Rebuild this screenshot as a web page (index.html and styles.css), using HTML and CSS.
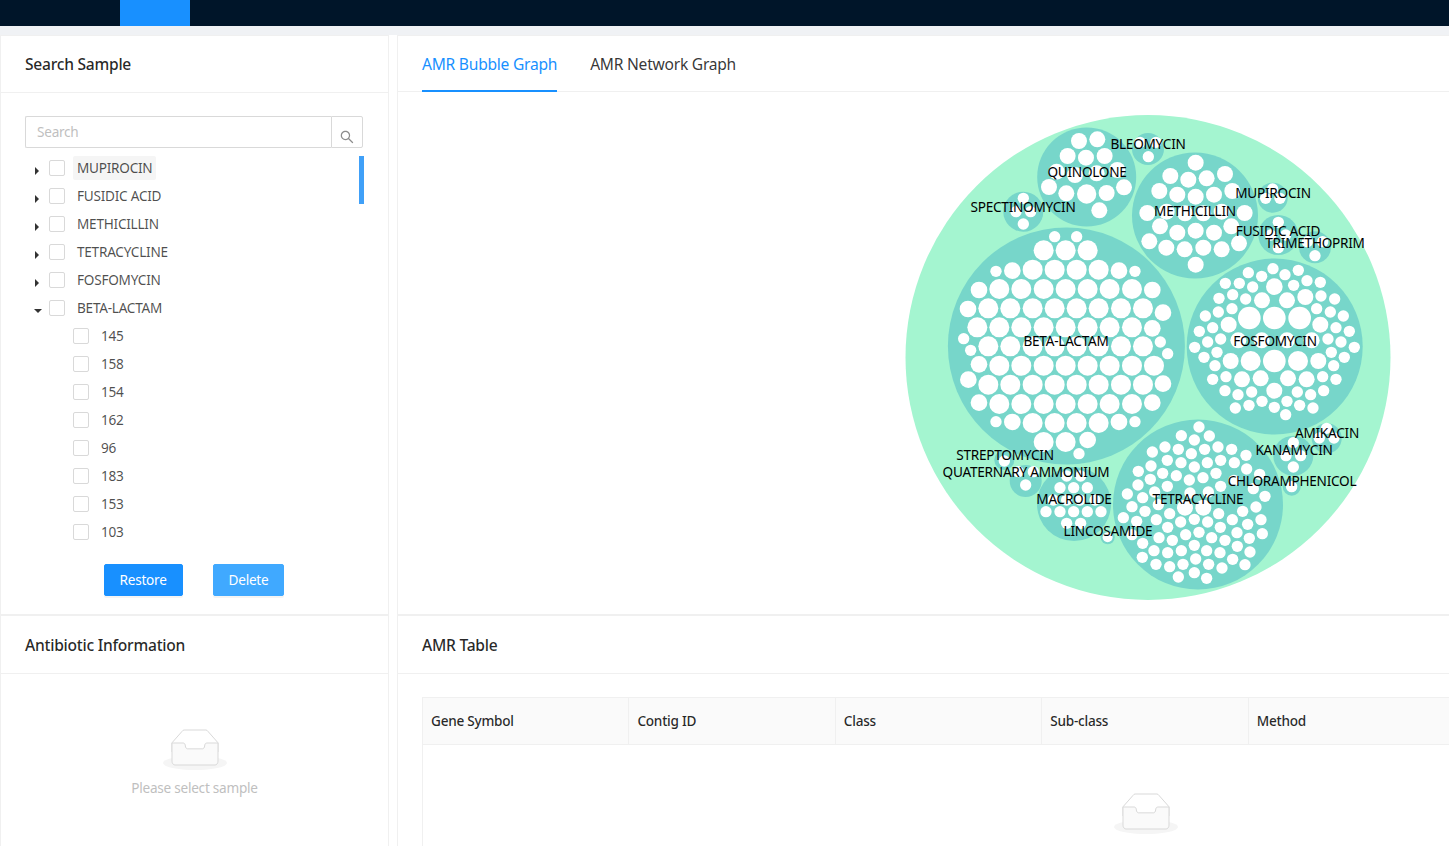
FILE: index.html
```html
<!DOCTYPE html>
<html lang="en">
<head>
    <meta charset="UTF-8">
    <meta name="viewport" content="width=device-width, initial-scale=1.0">
    <title>AMR Graph</title>
    <link rel="stylesheet" href="styles.css">
</head>
<body>
    <div class="topbar">
        <div class="topbar-item"></div>
    </div>
    <div class="page">
        <div class="col-left">
            <div class="card card-search">
                <div class="card-head">Search Sample</div>
                <div class="search-body">
                    <div class="search-box">
                        <input class="search-input" type="text" placeholder="Search">
                        <button class="search-btn" type="button">
                            <svg class="search-icon" viewBox="64 64 896 896"><path d="M909.6 854.5L649.9 594.8C690.2 542.7 712 479 712 412c0-80.2-31.3-155.4-87.9-212.1-56.6-56.7-132-87.9-212.1-87.9s-155.5 31.3-212.1 87.9C143.2 256.5 112 331.8 112 412c0 80.1 31.3 155.5 87.9 212.1C256.5 680.8 331.8 712 412 712c67 0 130.6-21.8 182.7-62l259.7 259.6a8.2 8.2 0 0 0 11.6 0l43.6-43.5a8.2 8.2 0 0 0 0-11.6zM570.4 570.4C528 612.7 471.8 636 412 636s-116-23.3-158.4-65.6C211.3 528 188 471.8 188 412s23.3-116 65.6-158.4C296 211.3 352.2 188 412 188s116 23.3 158.4 65.6S636 352.2 636 412s-23.3 116-65.6 158.4z"/></svg>
                        </button>
                    </div>
                    <div class="tree">
                        <div class="tree-thumb"></div>
                        <div class="tree-row"><span class="caret"></span><span class="check"></span><span class="tree-label selected">MUPIROCIN</span></div>
                        <div class="tree-row"><span class="caret"></span><span class="check"></span><span class="tree-label">FUSIDIC ACID</span></div>
                        <div class="tree-row"><span class="caret"></span><span class="check"></span><span class="tree-label">METHICILLIN</span></div>
                        <div class="tree-row"><span class="caret"></span><span class="check"></span><span class="tree-label">TETRACYCLINE</span></div>
                        <div class="tree-row"><span class="caret"></span><span class="check"></span><span class="tree-label">FOSFOMYCIN</span></div>
                        <div class="tree-row"><span class="caret open"></span><span class="check"></span><span class="tree-label">BETA-LACTAM</span></div>
                        <div class="tree-row child"><span class="check"></span><span class="tree-label">145</span></div>
                        <div class="tree-row child"><span class="check"></span><span class="tree-label">158</span></div>
                        <div class="tree-row child"><span class="check"></span><span class="tree-label">154</span></div>
                        <div class="tree-row child"><span class="check"></span><span class="tree-label">162</span></div>
                        <div class="tree-row child"><span class="check"></span><span class="tree-label">96</span></div>
                        <div class="tree-row child"><span class="check"></span><span class="tree-label">183</span></div>
                        <div class="tree-row child"><span class="check"></span><span class="tree-label">153</span></div>
                        <div class="tree-row child"><span class="check"></span><span class="tree-label">103</span></div>
                    </div>
                    <div class="actions">
                        <button class="btn" type="button">Restore</button>
                        <button class="btn btn-light" type="button">Delete</button>
                    </div>
                </div>
            </div>
            <div class="card card-info">
                <div class="card-head">Antibiotic Information</div>
                <div class="empty empty-info">
                    <svg class="empty-icon" viewBox="0 0 64 41"><g transform="translate(0 1)" fill="none" fill-rule="evenodd"><ellipse fill="#f5f5f5" cx="32" cy="33" rx="32" ry="7"/><g fill-rule="nonzero" stroke="#d9d9d9"><path d="M55 12.76L44.854 1.258C44.367.474 43.656 0 42.907 0H21.093c-.749 0-1.46.474-1.947 1.257L9 12.761V22h46v-9.24z"/><path d="M41.613 15.931c0-1.605.994-2.93 2.227-2.931H55v18.137C55 33.26 53.68 35 52.05 35h-40.1C10.32 35 9 33.259 9 31.137V13h11.16c1.233 0 2.227 1.323 2.227 2.928v.022c0 1.605 1.005 2.901 2.237 2.901h14.752c1.232 0 2.237-1.308 2.237-2.913v-.007z" fill="#fafafa"/></g></g></svg>
                    <div class="empty-text">Please select sample</div>
                </div>
            </div>
        </div>
        <div class="col-right">
            <div class="card card-graph">
                <div class="tabs">
                    <div class="tab active">AMR Bubble Graph</div>
                    <div class="tab">AMR Network Graph</div>
                </div>
                <svg class="bubble" viewBox="898 107 500 500">
                    <circle class="root" cx="1148" cy="357.5" r="242.5"/>
                    <g class="group">
                        <circle cx="1066.4" cy="346" r="118.5"/>
                        <circle cx="1274.7" cy="346.5" r="88"/>
                        <circle cx="1198" cy="504.5" r="85"/>
                        <circle cx="1195" cy="215.5" r="63"/>
                        <circle cx="1086.7" cy="177" r="49.5"/>
                        <circle cx="1023.3" cy="211.7" r="20"/>
                        <circle cx="1148" cy="149" r="16"/>
                        <circle cx="1272.7" cy="197.7" r="15"/>
                        <circle cx="1278.3" cy="235" r="20"/>
                        <circle cx="1315" cy="247.3" r="16"/>
                        <circle cx="1326.7" cy="438.3" r="15"/>
                        <circle cx="1293.3" cy="455.7" r="20"/>
                        <circle cx="1291.7" cy="486.7" r="9"/>
                        <circle cx="1004.3" cy="460" r="10"/>
                        <circle cx="1025.7" cy="481" r="16"/>
                        <circle cx="1074" cy="504" r="37"/>
                        <circle cx="1107.7" cy="537.3" r="7"/>
                    </g>

                    <!-- BETA-LACTAM -->
                    <g class="leaf" transform="translate(945 225) scale(.3333)">
                        <circle cx="329" cy="35" r="17"/><circle cx="395" cy="35" r="17"/>
                        <circle cx="296" cy="76" r="30"/><circle cx="362" cy="76" r="30"/><circle cx="428" cy="76" r="30"/>
                        <circle cx="153" cy="139" r="17"/><circle cx="202" cy="137" r="25"/><circle cx="263" cy="134" r="30"/><circle cx="329" cy="134" r="30"/><circle cx="395" cy="134" r="30"/><circle cx="461" cy="134" r="30"/><circle cx="522" cy="137" r="25"/><circle cx="570" cy="139" r="17"/>
                        <circle cx="102" cy="195" r="25"/><circle cx="163" cy="192" r="30"/><circle cx="229" cy="192" r="30"/><circle cx="296" cy="192" r="30"/><circle cx="362" cy="192" r="30"/><circle cx="428" cy="192" r="30"/><circle cx="494" cy="192" r="30"/><circle cx="561" cy="192" r="30"/><circle cx="622" cy="195" r="25"/>
                        <circle cx="69" cy="252" r="25"/><circle cx="130" cy="250" r="30"/><circle cx="196" cy="250" r="30"/><circle cx="263" cy="250" r="30"/><circle cx="329" cy="250" r="30"/><circle cx="395" cy="250" r="30"/><circle cx="461" cy="250" r="30"/><circle cx="528" cy="250" r="30"/><circle cx="594" cy="250" r="30"/><circle cx="654" cy="263" r="25"/>
                        <circle cx="97" cy="307" r="30"/><circle cx="163" cy="307" r="30"/><circle cx="229" cy="307" r="30"/><circle cx="296" cy="307" r="30"/><circle cx="362" cy="307" r="30"/><circle cx="428" cy="307" r="30"/><circle cx="494" cy="307" r="30"/><circle cx="561" cy="307" r="30"/><circle cx="622" cy="310" r="25"/>
                        <circle cx="56" cy="341" r="17"/><circle cx="77" cy="376" r="17"/><circle cx="130" cy="364" r="30"/><circle cx="196" cy="364" r="30"/><circle cx="263" cy="364" r="30"/><circle cx="329" cy="364" r="30"/><circle cx="395" cy="364" r="30"/><circle cx="461" cy="364" r="30"/><circle cx="528" cy="364" r="30"/><circle cx="594" cy="364" r="30"/><circle cx="646" cy="351" r="17"/><circle cx="668" cy="386" r="17"/>
                        <circle cx="102" cy="418" r="25"/><circle cx="163" cy="422" r="30"/><circle cx="229" cy="422" r="30"/><circle cx="296" cy="422" r="30"/><circle cx="362" cy="422" r="30"/><circle cx="428" cy="422" r="30"/><circle cx="494" cy="422" r="30"/><circle cx="561" cy="422" r="30"/><circle cx="627" cy="422" r="30"/>
                        <circle cx="70" cy="464" r="25"/><circle cx="130" cy="479" r="30"/><circle cx="196" cy="479" r="30"/><circle cx="263" cy="479" r="30"/><circle cx="329" cy="479" r="30"/><circle cx="395" cy="479" r="30"/><circle cx="461" cy="479" r="30"/><circle cx="528" cy="479" r="30"/><circle cx="594" cy="479" r="30"/><circle cx="654" cy="476" r="25"/>
                        <circle cx="102" cy="533" r="25"/><circle cx="163" cy="537" r="30"/><circle cx="229" cy="537" r="30"/><circle cx="296" cy="537" r="30"/><circle cx="362" cy="537" r="30"/><circle cx="428" cy="537" r="30"/><circle cx="494" cy="537" r="30"/><circle cx="561" cy="537" r="30"/><circle cx="622" cy="533" r="25"/>
                        <circle cx="153" cy="590" r="17"/><circle cx="202" cy="591" r="25"/><circle cx="263" cy="594" r="30"/><circle cx="329" cy="594" r="30"/><circle cx="395" cy="594" r="30"/><circle cx="461" cy="594" r="30"/><circle cx="522" cy="591" r="25"/><circle cx="570" cy="590" r="17"/>
                        <circle cx="296" cy="651" r="30"/><circle cx="362" cy="651" r="30"/><circle cx="428" cy="645" r="25"/><circle cx="402" cy="686" r="17"/>
                    </g>

                    <!-- FOSFOMYCIN -->
                    <g class="leaf" transform="translate(1185 257) scale(.3333)">
                        <circle cx="264" cy="35" r="17"/><circle cx="190" cy="47" r="17"/><circle cx="300" cy="53" r="17"/><circle cx="340" cy="40" r="17"/><circle cx="230" cy="58" r="17"/>
                        <circle cx="121" cy="79" r="17"/><circle cx="163" cy="79" r="17"/><circle cx="203" cy="90" r="17"/><circle cx="268" cy="89" r="25"/><circle cx="326" cy="85" r="17"/><circle cx="366" cy="71" r="17"/><circle cx="406" cy="76" r="17"/>
                        <circle cx="102" cy="124" r="17"/><circle cx="143" cy="113" r="17"/><circle cx="182" cy="126" r="17"/><circle cx="231" cy="130" r="24"/><circle cx="306" cy="130" r="24"/><circle cx="361" cy="120" r="24"/><circle cx="408" cy="117" r="17"/><circle cx="449" cy="126" r="17"/>
                        <circle cx="100" cy="165" r="17"/><circle cx="141" cy="155" r="17"/><circle cx="61" cy="177" r="17"/><circle cx="193" cy="183" r="34"/><circle cx="268" cy="183" r="34"/><circle cx="344" cy="183" r="34"/><circle cx="395" cy="155" r="17"/><circle cx="436" cy="165" r="17"/><circle cx="475" cy="177" r="17"/>
                        <circle cx="83" cy="212" r="17"/><circle cx="43" cy="223" r="17"/><circle cx="131" cy="203" r="24"/><circle cx="406" cy="203" r="24"/><circle cx="453" cy="212" r="17"/><circle cx="493" cy="223" r="17"/>
                        <circle cx="107" cy="246" r="17"/><circle cx="68" cy="255" r="17"/><circle cx="29" cy="271" r="17"/><circle cx="429" cy="246" r="17"/><circle cx="468" cy="255" r="17"/><circle cx="508" cy="271" r="17"/>
                        <circle cx="160" cy="250" r="24"/><circle cx="230" cy="250" r="24"/><circle cx="306" cy="250" r="24"/><circle cx="380" cy="250" r="24"/>
                        <circle cx="96" cy="286" r="17"/><circle cx="57" cy="301" r="17"/><circle cx="439" cy="286" r="17"/><circle cx="478" cy="301" r="17"/>
                        <circle cx="137" cy="312" r="24"/><circle cx="197" cy="312" r="30"/><circle cx="268" cy="312" r="34"/><circle cx="339" cy="312" r="30"/><circle cx="400" cy="312" r="24"/>
                        <circle cx="90" cy="326" r="17"/><circle cx="446" cy="326" r="17"/>
                        <circle cx="83" cy="367" r="17"/><circle cx="123" cy="359" r="17"/><circle cx="171" cy="367" r="24"/><circle cx="227" cy="364" r="24"/><circle cx="309" cy="364" r="24"/><circle cx="365" cy="367" r="24"/><circle cx="413" cy="359" r="17"/><circle cx="453" cy="367" r="17"/>
                        <circle cx="120" cy="401" r="17"/><circle cx="159" cy="413" r="17"/><circle cx="200" cy="405" r="17"/><circle cx="268" cy="401" r="24"/><circle cx="337" cy="405" r="17"/><circle cx="377" cy="413" r="17"/><circle cx="416" cy="401" r="17"/>
                        <circle cx="151" cy="453" r="17"/><circle cx="192" cy="445" r="17"/><circle cx="231" cy="433" r="17"/><circle cx="268" cy="451" r="17"/><circle cx="306" cy="433" r="17"/><circle cx="344" cy="445" r="17"/><circle cx="384" cy="453" r="17"/><circle cx="302" cy="473" r="17"/>
                    </g>

                    <!-- TETRACYCLINE -->
                    <g class="leaf" transform="translate(1110 417) scale(.3333)">
                        <circle cx="267" cy="30" r="17"/><circle cx="214" cy="56" r="17"/><circle cx="298" cy="57" r="17"/><circle cx="253" cy="69" r="17"/>
                        <circle cx="127" cy="105" r="17"/><circle cx="165" cy="90" r="17"/><circle cx="205" cy="97" r="17"/><circle cx="244" cy="110" r="17"/><circle cx="284" cy="97" r="17"/><circle cx="324" cy="90" r="17"/><circle cx="365" cy="97" r="17"/><circle cx="408" cy="115" r="17"/>
                        <circle cx="85" cy="163" r="17"/><circle cx="123" cy="147" r="17"/><circle cx="172" cy="130" r="17"/><circle cx="213" cy="137" r="17"/><circle cx="253" cy="150" r="17"/><circle cx="292" cy="137" r="17"/><circle cx="332" cy="130" r="17"/><circle cx="373" cy="137" r="17"/><circle cx="410" cy="156" r="17"/>
                        <circle cx="158" cy="169" r="17"/><circle cx="199" cy="176" r="17"/><circle cx="238" cy="189" r="17"/><circle cx="279" cy="182" r="17"/><circle cx="318" cy="169" r="17"/><circle cx="449" cy="172" r="17"/>
                        <circle cx="84" cy="204" r="17"/><circle cx="121" cy="187" r="17"/><circle cx="172" cy="208" r="17"/><circle cx="332" cy="208" r="17"/><circle cx="372" cy="190" r="17"/><circle cx="430" cy="215" r="17"/><circle cx="240" cy="228" r="17"/><circle cx="295" cy="225" r="17"/>
                        <circle cx="52" cy="231" r="17"/><circle cx="98" cy="242" r="17"/><circle cx="134" cy="225" r="17"/><circle cx="465" cy="238" r="17"/>
                        <circle cx="66" cy="269" r="17"/><circle cx="105" cy="283" r="17"/><circle cx="145" cy="263" r="17"/><circle cx="40" cy="302" r="17"/><circle cx="80" cy="313" r="17"/><circle cx="438" cy="270" r="17"/><circle cx="398" cy="283" r="17"/>
                        <circle cx="179" cy="290" r="17"/><circle cx="225" cy="272" r="24"/><circle cx="280" cy="272" r="24"/><circle cx="326" cy="290" r="17"/><circle cx="367" cy="308" r="17"/><circle cx="453" cy="308" r="17"/>
                        <circle cx="139" cy="308" r="17"/><circle cx="212" cy="315" r="17"/><circle cx="253" cy="307" r="17"/><circle cx="293" cy="315" r="17"/><circle cx="413" cy="322" r="17"/>
                        <circle cx="173" cy="331" r="17"/><circle cx="331" cy="331" r="17"/><circle cx="66" cy="353" r="17"/><circle cx="147" cy="362" r="17"/><circle cx="227" cy="353" r="17"/><circle cx="267" cy="346" r="17"/><circle cx="381" cy="347" r="17"/><circle cx="457" cy="350" r="17"/>
                        <circle cx="98" cy="379" r="17"/><circle cx="187" cy="370" r="17"/><circle cx="305" cy="362" r="17"/><circle cx="345" cy="370" r="17"/><circle cx="418" cy="364" r="17"/>
                        <circle cx="132" cy="401" r="17"/><circle cx="253" cy="385" r="17"/><circle cx="382" cy="388" r="17"/>
                        <circle cx="97" cy="421" r="17"/><circle cx="173" cy="407" r="17"/><circle cx="214" cy="401" r="17"/><circle cx="290" cy="401" r="17"/><circle cx="330" cy="407" r="17"/><circle cx="420" cy="405" r="17"/>
                        <circle cx="138" cy="442" r="17"/><circle cx="179" cy="449" r="17"/><circle cx="219" cy="442" r="17"/><circle cx="257" cy="426" r="17"/><circle cx="296" cy="442" r="17"/><circle cx="336" cy="453" r="17"/><circle cx="368" cy="427" r="17"/><circle cx="405" cy="443" r="17"/>
                        <circle cx="205" cy="480" r="17"/><circle cx="253" cy="467" r="17"/><circle cx="290" cy="484" r="17"/>
                    </g>

                    <!-- METHICILLIN, MUPIROCIN, FUSIDIC ACID, TRIMETHOPRIM, BLEOMYCIN -->
                    <g class="leaf" transform="translate(1120 110) scale(.3333)">
                        <circle cx="227" cy="158" r="24"/><circle cx="151" cy="198" r="24"/><circle cx="205" cy="209" r="24"/><circle cx="260" cy="205" r="24"/><circle cx="315" cy="192" r="24"/>
                        <circle cx="118" cy="243" r="24"/><circle cx="172" cy="254" r="24"/><circle cx="227" cy="260" r="24"/><circle cx="282" cy="254" r="24"/><circle cx="337" cy="243" r="24"/>
                        <circle cx="82" cy="309" r="24"/><circle cx="140" cy="305" r="24"/><circle cx="195" cy="310" r="24"/><circle cx="250" cy="310" r="24"/><circle cx="305" cy="305" r="24"/><circle cx="374" cy="309" r="24"/>
                        <circle cx="120" cy="349" r="24"/><circle cx="172" cy="368" r="24"/><circle cx="227" cy="362" r="24"/><circle cx="282" cy="368" r="24"/><circle cx="334" cy="349" r="24"/>
                        <circle cx="88" cy="394" r="24"/><circle cx="139" cy="413" r="24"/><circle cx="194" cy="418" r="24"/><circle cx="250" cy="413" r="24"/><circle cx="305" cy="418" r="24"/><circle cx="357" cy="400" r="24"/><circle cx="227" cy="464" r="24"/>
                        <circle cx="437" cy="265" r="17"/><circle cx="480" cy="265" r="17"/><circle cx="458" cy="237" r="17"/>
                        <circle cx="475" cy="337" r="17"/><circle cx="452" cy="375" r="17"/><circle cx="497" cy="375" r="17"/><circle cx="475" cy="413" r="17"/>
                        <circle cx="585" cy="437" r="17"/><circle cx="562" cy="395" r="17"/><circle cx="608" cy="395" r="17"/>
                        <circle cx="85" cy="140" r="17"/><circle cx="60" cy="97" r="17"/><circle cx="108" cy="97" r="17"/>
                    </g>

                    <!-- QUINOLONE, SPECTINOMYCIN -->
                    <g class="leaf" transform="translate(900 110) scale(.3333)">
                        <circle cx="537" cy="93" r="24"/><circle cx="592" cy="88" r="24"/><circle cx="503" cy="138" r="24"/><circle cx="558" cy="143" r="24"/><circle cx="614" cy="138" r="24"/>
                        <circle cx="470" cy="185" r="24"/><circle cx="525" cy="195" r="24"/><circle cx="590" cy="190" r="24"/><circle cx="652" cy="180" r="24"/>
                        <circle cx="447" cy="231" r="24"/><circle cx="499" cy="250" r="24"/><circle cx="560" cy="252" r="29"/><circle cx="620" cy="249" r="24"/><circle cx="672" cy="232" r="24"/><circle cx="598" cy="301" r="24"/>
                        <circle cx="370" cy="265" r="17"/><circle cx="348" cy="305" r="17"/><circle cx="392" cy="305" r="17"/><circle cx="370" cy="342" r="17"/>
                    </g>

                    <!-- AMIKACIN, KANAMYCIN, CHLORAMPHENICOL -->
                    <g class="leaf" transform="translate(1120 350) scale(.3333)">
                        <circle cx="598" cy="264" r="17"/><circle cx="642" cy="264" r="17"/><circle cx="620" cy="235" r="17"/>
                        <circle cx="520" cy="278" r="17"/><circle cx="498" cy="317" r="17"/><circle cx="542" cy="317" r="17"/><circle cx="520" cy="351" r="17"/>
                        <circle cx="515" cy="410" r="17"/>
                    </g>

                    <!-- STREPTOMYCIN, QUATERNARY AMMONIUM, MACROLIDE, LINCOSAMIDE -->
                    <g class="leaf" transform="translate(900 350) scale(.3333)">
                        <circle cx="313" cy="333" r="17"/>
                        <circle cx="377" cy="405" r="17"/><circle cx="355" cy="365" r="17"/><circle cx="400" cy="365" r="17"/>
                        <circle cx="438" cy="485" r="17"/><circle cx="480" cy="485" r="17"/><circle cx="521" cy="485" r="17"/><circle cx="562" cy="485" r="17"/><circle cx="603" cy="485" r="17"/>
                        <circle cx="480" cy="413" r="17"/><circle cx="521" cy="413" r="17"/><circle cx="562" cy="413" r="17"/><circle cx="542" cy="520" r="17"/><circle cx="500" cy="520" r="17"/>
                        <circle cx="460" cy="450" r="17"/><circle cx="500" cy="450" r="17"/><circle cx="540" cy="450" r="17"/><circle cx="585" cy="450" r="17"/><circle cx="500" cy="378" r="17"/><circle cx="542" cy="378" r="17"/>
                        <circle cx="623" cy="562" r="15"/>
                    </g>

                    <g class="labels">
                        <text x="1148" y="149">BLEOMYCIN</text>
                        <text x="1087" y="177">QUINOLONE</text>
                        <text x="1023" y="212">SPECTINOMYCIN</text>
                        <text x="1195" y="216">METHICILLIN</text>
                        <text x="1273" y="198">MUPIROCIN</text>
                        <text x="1278" y="236">FUSIDIC ACID</text>
                        <text x="1315" y="248">TRIMETHOPRIM</text>
                        <text x="1066" y="346">BETA-LACTAM</text>
                        <text x="1275" y="346">FOSFOMYCIN</text>
                        <text x="1327" y="438">AMIKACIN</text>
                        <text x="1294" y="455">KANAMYCIN</text>
                        <text x="1292" y="486">CHLORAMPHENICOL</text>
                        <text x="1005" y="460">STREPTOMYCIN</text>
                        <text x="1026" y="477">QUATERNARY AMMONIUM</text>
                        <text x="1074" y="504">MACROLIDE</text>
                        <text x="1198" y="504">TETRACYCLINE</text>
                        <text x="1108" y="536">LINCOSAMIDE</text>
                    </g>
                </svg>
            </div>
            <div class="card card-table">
                <div class="card-head">AMR Table</div>
                <div class="table-body">
                    <table class="amr-table">
                        <thead>
                            <tr>
                                <th>Gene Symbol</th>
                                <th>Contig ID</th>
                                <th>Class</th>
                                <th>Sub-class</th>
                                <th>Method</th>
                                <th></th>
                                <th></th>
                            </tr>
                        </thead>
                        <tbody>
                            <tr>
                                <td colspan="7">
                                    <div class="empty">
                                        <svg class="empty-icon" viewBox="0 0 64 41"><g transform="translate(0 1)" fill="none" fill-rule="evenodd"><ellipse fill="#f5f5f5" cx="32" cy="33" rx="32" ry="7"/><g fill-rule="nonzero" stroke="#d9d9d9"><path d="M55 12.76L44.854 1.258C44.367.474 43.656 0 42.907 0H21.093c-.749 0-1.46.474-1.947 1.257L9 12.761V22h46v-9.24z"/><path d="M41.613 15.931c0-1.605.994-2.93 2.227-2.931H55v18.137C55 33.26 53.68 35 52.05 35h-40.1C10.32 35 9 33.259 9 31.137V13h11.16c1.233 0 2.227 1.323 2.227 2.928v.022c0 1.605 1.005 2.901 2.237 2.901h14.752c1.232 0 2.237-1.308 2.237-2.913v-.007z" fill="#fafafa"/></g></g></svg>
                                    </div>
                                </td>
                            </tr>
                        </tbody>
                    </table>
                </div>
            </div>
        </div>
    </div>
</body>
</html>
```

FILE: styles.css
```css
* {
    box-sizing: border-box;
}

html, body {
    height: 846px;
}

body {
    margin: 0;
    overflow: hidden;
    background: #f0f2f5;
    font-family: "Noto Sans", "Open Sans", Arial, sans-serif;
    font-size: 13.6px;
    letter-spacing: -0.25px;
    color: rgba(0, 0, 0, 0.7);
}

.topbar {
    display: flex;
    height: 26px;
    padding-left: 120px;
    background: #001529;
}

.topbar-item {
    width: 70px;
    background: #1890ff;
}

.page {
    display: flex;
    gap: 8px;
    width: 1894px;
    margin-top: 9px;
    background: #fff;
}

.col-left {
    flex: 0 0 389px;
}

.col-right {
    flex: 0 0 1497px;
}

.card {
    background: #fff;
    border: 1px solid #f0f0f0;
}

.card-head {
    height: 57px;
    padding-left: 24px;
    border-bottom: 1px solid #f0f0f0;
    font-size: 15.6px;
    font-weight: 500;
    line-height: 56px;
    color: rgba(0, 0, 0, 0.85);
}

.card-info .card-head,
.card-table .card-head {
    height: 58px;
    line-height: 58px;
}

.card-search,
.card-graph {
    height: 580px;
}

.card-info,
.card-table {
    height: 300px;
}

.search-body {
    padding: 23px 25px 0 24px;
}

.search-box {
    display: flex;
    height: 32px;
}

.search-input {
    flex: 1;
    min-width: 0;
    padding: 0 11px 2px;
    border: 1px solid #d9d9d9;
    border-right: none;
    border-radius: 2px 0 0 2px;
    outline: none;
    font: inherit;
    letter-spacing: inherit;
}

.search-input::placeholder {
    color: #bfbfbf;
}

.search-btn {
    display: flex;
    justify-content: center;
    align-items: flex-start;
    width: 32px;
    padding: 13px 0 0;
    background: #fff;
    border: 1px solid #d9d9d9;
    border-radius: 0 2px 2px 0;
}

.search-icon {
    width: 14px;
    height: 14px;
    fill: #8c8c8c;
}

.tree {
    position: relative;
    height: 392px;
    margin-top: 6px;
}

.tree-thumb {
    position: absolute;
    top: 2px;
    right: -1px;
    width: 5px;
    height: 48px;
    background: #40a0f8;
}

.tree-row {
    display: flex;
    align-items: center;
    height: 28px;
}

.tree-row.child {
    padding-left: 48px;
}

.caret {
    flex: none;
    width: 0;
    height: 0;
    margin: 6px 10px 0 10px;
    border-top: 4px solid transparent;
    border-bottom: 4px solid transparent;
    border-left: 4px solid #333;
    border-right: 0;
}

.caret.open {
    margin: 6px 7px 0 9px;
    border-top: 4px solid #333;
    border-bottom: 0;
    border-left: 4px solid transparent;
    border-right: 4px solid transparent;
}

.check {
    flex: none;
    width: 16px;
    height: 16px;
    border: 1px solid #d9d9d9;
    border-radius: 2px;
    background: #fff;
}

.tree-label {
    height: 24px;
    margin-left: 8px;
    padding: 0 4px;
    line-height: 24px;
    border-radius: 2px;
}

.tree-label.selected {
    background: #f5f5f5;
}

.actions {
    display: flex;
    justify-content: center;
    gap: 30px;
    margin-top: 18px;
}

.btn {
    height: 32px;
    padding: 0 15px 2px;
    background: #1890ff;
    border: 1px solid #1890ff;
    border-radius: 2px;
    box-shadow: 0 2px 0 rgba(0, 0, 0, 0.045);
    font: inherit;
    letter-spacing: inherit;
    color: #fff;
}

.btn-light {
    background: #40a9ff;
    border-color: #40a9ff;
}

.empty {
    display: flex;
    flex-direction: column;
    align-items: center;
}

.empty-info {
    padding-top: 55px;
}

.empty-icon {
    display: block;
    width: 64px;
    height: 41px;
}

.empty-text {
    margin-top: 7px;
    line-height: 22px;
    color: #bfbfbf;
}

.tabs {
    display: flex;
    gap: 33px;
    height: 56px;
    padding-left: 24px;
    border-bottom: 1px solid #f0f0f0;
}

.tab {
    height: 56px;
    font-size: 15.6px;
    line-height: 56px;
    color: rgba(0, 0, 0, 0.8);
}

.tab.active {
    color: #1890ff;
    border-bottom: 2px solid #1890ff;
}

.bubble {
    display: block;
    width: 500px;
    height: 500px;
    margin: 15px 0 0 500px;
}

.root {
    fill: #a4f5d0;
}

.group circle {
    fill: #77d6ca;
}

.leaf circle {
    fill: #fff;
}

.labels text {
    font-size: 13.6px;
    fill: #000;
    text-anchor: middle;
}

.table-body {
    padding: 23px 24px 0;
}

.amr-table {
    width: 1446px;
    table-layout: fixed;
    border-collapse: separate;
    border-spacing: 0;
    border-top: 1px solid #f0f0f0;
    border-left: 1px solid #f0f0f0;
}

.amr-table th {
    height: 47px;
    padding: 0 8px 2px;
    background: #fafafa;
    border-right: 1px solid #f0f0f0;
    border-bottom: 1px solid #f0f0f0;
    font-weight: 500;
    text-align: left;
    color: rgba(0, 0, 0, 0.85);
}

.amr-table td {
    padding: 48px 0 60px;
}
```
